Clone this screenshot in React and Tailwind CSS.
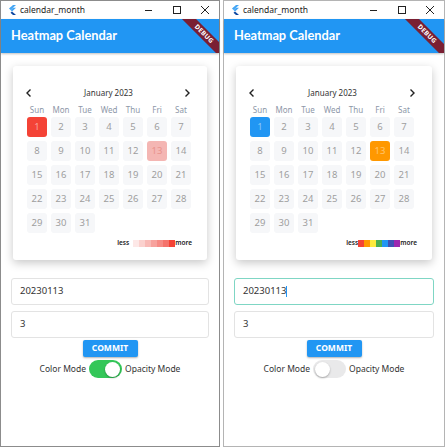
import React from "react";

const days = Array.from({ length: 31 }, (_, i) => i + 1);
const labels = ["Sun", "Mon", "Tue", "Wed", "Thu", "Fri", "Sat"];
const redScale = ["#fde8e7", "#fbd1ce", "#f9bab6", "#f7a29d", "#f68b85", "#f5736c", "#f44336"];
const rainbow = ["#f44336", "#ff9800", "#ffeb3b", "#4caf50", "#2196f3", "#3f51b5", "#9c27b0"];

function FlutterLogo() {
  return (
    <svg width="8" height="10" viewBox="0 0 8 10">
      <polygon points="5,0 8,0 2.5,5 1,3.6" fill="#42a5f5" />
      <polygon points="2.5,5 5,2.8 8,2.8 4,6.4" fill="#42a5f5" />
      <polygon points="4,6.4 8,10 5,10 2.5,7.8" fill="#0d47a1" />
    </svg>
  );
}

function TitleBar() {
  return (
    <div className="h-[18px] flex items-center bg-white text-[8.5px] text-[#222]">
      <div className="pl-[7px] pr-[4px] flex items-center">
        <FlutterLogo />
      </div>
      <span>calendar_month</span>
      <div className="ml-auto flex items-center">
        <svg width="28" height="10" viewBox="0 0 28 10">
          <line x1="10" y1="5.5" x2="17" y2="5.5" stroke="#222" strokeWidth="1" />
        </svg>
        <svg width="28" height="10" viewBox="0 0 28 10">
          <rect x="10.5" y="1.5" width="7" height="7" fill="none" stroke="#222" strokeWidth="1" />
        </svg>
        <svg width="28" height="10" viewBox="0 0 28 10">
          <path d="M10 1 L18 9 M18 1 L10 9" stroke="#222" strokeWidth="1" />
        </svg>
      </div>
    </div>
  );
}

function AppBar() {
  return (
    <div className="relative h-[34px] bg-[#2196f3] overflow-hidden flex items-center px-[10px] shadow-[0_1px_2px_rgba(0,0,0,0.25)]">
      <span className="text-white text-[12.8px] font-bold" style={{ fontFamily: "Lato, sans-serif" }}>
        Heatmap Calendar
      </span>
      <div className="absolute left-[168px] top-[10px] w-[70px] h-[10px] bg-[#7a1f33] rotate-45 flex items-center justify-center">
        <span className="text-white text-[6.5px] font-bold tracking-[0.3px] leading-none">DEBUG</span>
      </div>
    </div>
  );
}

function Calendar({ color }) {
  const first = color ? "bg-[#f44336] text-[#f9a09a]" : "bg-[#2196f3] text-[#8cc8f8]";
  const thirteen = color ? "bg-[#f4b6b3] text-[#e8928c]" : "bg-[#ff9800] text-[#ffc56e]";
  const legend = color ? redScale : rainbow;
  return (
    <div className="mx-[12px] mt-[13px] bg-white rounded-[3px] shadow-[0_3px_10px_rgba(0,0,0,0.22)] pt-[20px] pb-[12px] pl-[14px] pr-[15px]">
      <div className="h-[14px] flex items-center justify-between text-[8px] text-[#333]">
        <svg width="14" height="10" viewBox="0 0 14 10" className="-ml-[4px]">
          <path d="M7.5 1.5 L4 5 L7.5 8.5" fill="none" stroke="#222" strokeWidth="1.4" />
        </svg>
        <span>January 2023</span>
        <svg width="14" height="10" viewBox="0 0 14 10" className="-mr-[2px]">
          <path d="M5.5 1.5 L9 5 L5.5 8.5" fill="none" stroke="#222" strokeWidth="1.4" />
        </svg>
      </div>
      <div className="mt-[5px] h-[10px] grid grid-cols-7 gap-x-[4px] w-[164px] text-[8px] text-[#8d97a8] text-center leading-[10px]">
        {labels.map((l) => (
          <span key={l}>{l}</span>
        ))}
      </div>
      <div className="mt-[2px] grid grid-cols-7 gap-[4px] w-[164px]">
        {days.map((d) => {
          let cls = "bg-[#f6f7f9] text-[#9e9e9e]";
          if (d === 1) cls = first;
          if (d === 13) cls = thirteen;
          return (
            <div key={d} className={`h-[20px] w-[20px] rounded-[3px] flex items-center justify-center text-[9.5px] ${cls}`}>
              {d}
            </div>
          );
        })}
      </div>
      <div className="mt-[5px] h-[10px] flex items-center justify-end text-[6.5px] text-[#222] font-semibold">
        <span className={color ? "mr-[4px]" : ""}>less</span>
        {legend.map((c) => (
          <span key={c} className="w-[6px] h-[7px]" style={{ background: c }} />
        ))}
        <span>more</span>
      </div>
    </div>
  );
}

function Window({ color, focused, border }) {
  return (
    <div className={`h-[447px] flex flex-col border bg-white ${border}`}>
      <TitleBar />
      <AppBar />
      <Calendar color={color} />
      <div
        className={`mx-[10px] mt-[18px] h-[27px] rounded-[3px] border flex items-center px-[8px] text-[9.5px] text-[#333] ${
          focused ? "border-[#7fd6c4]" : "border-[#e3e3e3]"
        }`}
      >
        20230113
        {focused && <span className="w-px h-[11px] bg-[#2196f3]" />}
      </div>
      <div className="mx-[10px] mt-[6px] h-[27px] rounded-[3px] border border-[#e3e3e3] flex items-center px-[8px] text-[9.5px] text-[#333]">
        3
      </div>
      <div className="flex justify-center mt-[2px]">
        <button className="w-[55px] h-[17px] bg-[#2196f3] rounded-[2px] text-white text-[8.5px] font-bold shadow-[0_1px_2px_rgba(0,0,0,0.3)]">
          COMMIT
        </button>
      </div>
      <div className="flex justify-center items-center mt-[3px] text-[8.5px] text-[#333] gap-[3px]">
        <span>Color Mode</span>
        <div
          className={`w-[33px] h-[18px] rounded-full flex items-center px-[2px] ${
            color ? "bg-[#34c759] justify-end" : "bg-[#e9e9ea] justify-start"
          }`}
        >
          <div className="w-[15px] h-[15px] rounded-full bg-white shadow-[0_1px_2px_rgba(0,0,0,0.3)]" />
        </div>
        <span>Opacity Mode</span>
      </div>
    </div>
  );
}

export default function App() {
  return (
    <div className="w-[445px] h-[447px] flex bg-white" style={{ fontFamily: '"Noto Sans", "Open Sans", sans-serif' }}>
      <div className="w-[220px]">
        <Window color focused={false} border="border-[#8c8c8c]" />
      </div>
      <div className="w-[222px] ml-[3px]">
        <Window color={false} focused border="border-[#b4b4b4]" />
      </div>
    </div>
  );
}
